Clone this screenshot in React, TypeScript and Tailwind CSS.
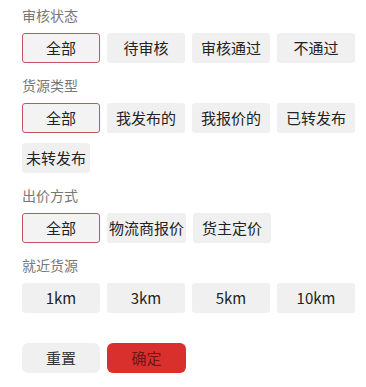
const sections = [
  { title: "审核状态", items: ["全部", "待审核", "审核通过", "不通过"] },
  { title: "货源类型", items: ["全部", "我发布的", "我报价的", "已转发布", "未转发布"] },
  { title: "出价方式", items: ["全部", "物流商报价", "货主定价"] },
  { title: "就近货源", items: ["1km", "3km", "5km", "10km"] },
];

function Chip({ label, active, narrow }: { label: string; active: boolean; narrow?: boolean }) {
  return (
    <button
      className={
        "h-[30px] px-[2px] flex items-center justify-center whitespace-nowrap text-[15px] text-[#222] rounded-[3px] " +
        (narrow ? "w-[68px] " : "min-w-[78px] ") +
        (active ? "bg-[#f3f3f3] border border-[#c25560]" : "bg-[#f0f0f0]")
      }
    >
      {label}
    </button>
  );
}

export default function App() {
  return (
    <div
      className="w-[366px] h-[387px] bg-white pl-[22px] pr-[10px] pt-[5px]"
      style={{ fontFamily: '"Noto Sans CJK SC", "Noto Sans", sans-serif' }}
    >
      {sections.map((s, i) => (
        <div key={s.title} className={i > 0 ? "mt-[12px]" : ""}>
          <div className="text-[14px] leading-[20px] text-[#777]">{s.title}</div>
          <div className="mt-[8px] flex flex-wrap gap-x-[7px] gap-y-[10px]">
            {s.items.map((it, j) => (
              <Chip key={it} label={it} active={j === 0 && i < 3} narrow={it === "未转发布"} />
            ))}
          </div>
        </div>
      ))}
      <div className="mt-[30px] flex gap-[7px]">
        <button className="w-[78px] h-[30px] rounded-[6px] bg-[#f0f0f0] text-[15px] text-[#333]">重置</button>
        <button className="w-[79px] h-[30px] rounded-[6px] bg-[#d9302e] text-[15px] text-[#6e1515]">确定</button>
      </div>
    </div>
  );
}
